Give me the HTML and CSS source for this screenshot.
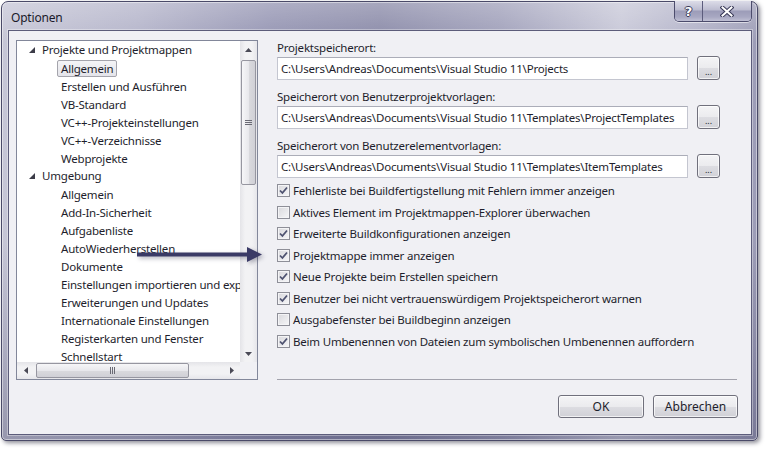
FILE: index.html
```html
<!DOCTYPE html>
<html lang="de">
<head>
<meta charset="utf-8">
<title>Optionen</title>
<link rel="stylesheet" href="styles.css">
</head>
<body>
<div class="window">
  <div class="titlebar">
    <span class="title">Optionen</span>
    <div class="caption-btns">
      <span class="cap-btn help">?</span>
      <span class="cap-btn close">
        <svg width="14" height="11" viewBox="0 0 14 11">
          <path d="M2.5 1.5 L11.5 9.5 M11.5 1.5 L2.5 9.5" stroke="#3a3a58" stroke-width="4" stroke-linecap="square"/>
          <path d="M2.5 1.5 L11.5 9.5 M11.5 1.5 L2.5 9.5" stroke="#ffffff" stroke-width="2" stroke-linecap="square"/>
        </svg>
      </span>
    </div>
  </div>
  <div class="client">
    <div class="tree">
      <div class="tree-content">
        <div class="node l0"><svg class="exp" width="6" height="6" viewBox="0 0 6 6"><polygon points="6,0 6,6 0,6" fill="#3c3c48"/></svg>Projekte und Projektmappen</div>
        <div class="node l1"><span class="item sel">Allgemein</span></div>
        <div class="node l1"><span class="item">Erstellen und Ausführen</span></div>
        <div class="node l1"><span class="item">VB-Standard</span></div>
        <div class="node l1"><span class="item">VC++-Projekteinstellungen</span></div>
        <div class="node l1"><span class="item">VC++-Verzeichnisse</span></div>
        <div class="node l1"><span class="item">Webprojekte</span></div>
        <div class="node l0"><svg class="exp" width="6" height="6" viewBox="0 0 6 6"><polygon points="6,0 6,6 0,6" fill="#3c3c48"/></svg>Umgebung</div>
        <div class="node l1"><span class="item">Allgemein</span></div>
        <div class="node l1"><span class="item">Add-In-Sicherheit</span></div>
        <div class="node l1"><span class="item">Aufgabenliste</span></div>
        <div class="node l1"><span class="item">AutoWiederherstellen</span></div>
        <div class="node l1"><span class="item">Dokumente</span></div>
        <div class="node l1"><span class="item">Einstellungen importieren und exportieren</span></div>
        <div class="node l1"><span class="item">Erweiterungen und Updates</span></div>
        <div class="node l1"><span class="item">Internationale Einstellungen</span></div>
        <div class="node l1"><span class="item">Registerkarten und Fenster</span></div>
        <div class="node l1"><span class="item">Schnellstart</span></div>
        <div class="node l1"><span class="item">Suchen und Ersetzen</span></div>
      </div>
      <div class="vscroll">
        <div class="sb-btn"><svg width="7" height="4" viewBox="0 0 7 4"><polygon points="3.5,0 7,4 0,4" fill="#4a4a56"/></svg></div>
        <div class="vtrack">
          <div class="vthumb"><svg width="7" height="5" viewBox="0 0 7 5"><path d="M0 0.5H7M0 2.5H7M0 4.5H7" stroke="#6a6a74" stroke-width="1"/></svg></div>
        </div>
        <div class="sb-btn"><svg width="7" height="4" viewBox="0 0 7 4"><polygon points="0,0 7,0 3.5,4" fill="#4a4a56"/></svg></div>
      </div>
      <div class="hscroll">
        <div class="sb-btn"><svg width="4" height="7" viewBox="0 0 4 7"><polygon points="4,0 4,7 0,3.5" fill="#4a4a56"/></svg></div>
        <div class="htrack">
          <div class="hthumb"><svg width="5" height="7" viewBox="0 0 5 7"><path d="M0.5 0V7M2.5 0V7M4.5 0V7" stroke="#6a6a74" stroke-width="1"/></svg></div>
        </div>
        <div class="sb-btn"><svg width="4" height="7" viewBox="0 0 4 7"><polygon points="0,0 4,3.5 0,7" fill="#4a4a56"/></svg></div>
      </div>
      <div class="corner"></div>
    </div>

    <div class="settings">
      <div class="field-label">Projektspeicherort:</div>
      <div class="pathrow">
        <div class="textbox">C:\Users\Andreas\Documents\Visual Studio 11\Projects</div>
        <button class="browse">...</button>
      </div>
      <div class="field-label">Speicherort von Benutzerprojektvorlagen:</div>
      <div class="pathrow">
        <div class="textbox">C:\Users\Andreas\Documents\Visual Studio 11\Templates\ProjectTemplates</div>
        <button class="browse">...</button>
      </div>
      <div class="field-label">Speicherort von Benutzerelementvorlagen:</div>
      <div class="pathrow">
        <div class="textbox">C:\Users\Andreas\Documents\Visual Studio 11\Templates\ItemTemplates</div>
        <button class="browse">...</button>
      </div>

      <div class="checks">
        <div class="check on"><span class="box"><svg width="9" height="9" viewBox="0 0 9 9"><path d="M1 4.5 L3.4 7 L8 1.5" fill="none" stroke="#4e5270" stroke-width="1.8"/></svg></span>Fehlerliste bei Buildfertigstellung mit Fehlern immer anzeigen</div>
        <div class="check"><span class="box"></span>Aktives Element im Projektmappen-Explorer überwachen</div>
        <div class="check on"><span class="box"><svg width="9" height="9" viewBox="0 0 9 9"><path d="M1 4.5 L3.4 7 L8 1.5" fill="none" stroke="#4e5270" stroke-width="1.8"/></svg></span>Erweiterte Buildkonfigurationen anzeigen</div>
        <div class="check on"><span class="box"><svg width="9" height="9" viewBox="0 0 9 9"><path d="M1 4.5 L3.4 7 L8 1.5" fill="none" stroke="#4e5270" stroke-width="1.8"/></svg></span>Projektmappe immer anzeigen</div>
        <div class="check on"><span class="box"><svg width="9" height="9" viewBox="0 0 9 9"><path d="M1 4.5 L3.4 7 L8 1.5" fill="none" stroke="#4e5270" stroke-width="1.8"/></svg></span>Neue Projekte beim Erstellen speichern</div>
        <div class="check on"><span class="box"><svg width="9" height="9" viewBox="0 0 9 9"><path d="M1 4.5 L3.4 7 L8 1.5" fill="none" stroke="#4e5270" stroke-width="1.8"/></svg></span>Benutzer bei nicht vertrauenswürdigem Projektspeicherort warnen</div>
        <div class="check"><span class="box"></span>Ausgabefenster bei Buildbeginn anzeigen</div>
        <div class="check on"><span class="box"><svg width="9" height="9" viewBox="0 0 9 9"><path d="M1 4.5 L3.4 7 L8 1.5" fill="none" stroke="#4e5270" stroke-width="1.8"/></svg></span>Beim Umbenennen von Dateien zum symbolischen Umbenennen auffordern</div>
      </div>
      <div class="sep"></div>
    </div>

    <div class="buttons">
      <button class="btn ok">OK</button>
      <button class="btn cancel">Abbrechen</button>
    </div>
  </div>
</div>

<svg class="pointer-arrow" width="140" height="30" viewBox="0 0 140 30">
  <rect x="7" y="12.5" width="114" height="4" fill="#3a3a66"/>
  <polygon points="117,7 132,14.5 117,22" fill="#3a3a66"/>
</svg>
</body>
</html>
```

FILE: styles.css
```css
* { box-sizing: border-box; }

html, body { margin: 0; }

body {
  position: relative;
  width: 767px;
  height: 450px;
  overflow: hidden;
  padding: 1px;
  background: #ffffff;
  font-family: "Noto Sans", "Open Sans", sans-serif;
  font-size: 11.5px;
  letter-spacing: -0.2px;
  color: #1e1e2c;
}

.window {
  width: 757px;
  height: 440px;
  display: flex;
  flex-direction: column;
  border: 1px solid #4a4a68;
  border-radius: 7px 7px 5px 5px;
  background:
    linear-gradient(180deg, rgba(255,255,255,0.25) 0, rgba(255,255,255,0) 40px, rgba(0,0,0,0) 55%, rgba(30,30,70,0.28) 100%),
    linear-gradient(90deg, #c6c6d6 0%, #b4b4ca 18%, #9494b2 36%, #8a8aa8 50%, #a0a0ba 66%, #c8c8d8 82%, #b2b2c8 92%, #9c9cb6 100%);
  box-shadow: 2px 2px 4px rgba(30,30,50,0.5), inset 0 0 0 1px rgba(255,255,255,0.45);
}

.titlebar {
  height: 28px;
  flex: none;
  display: flex;
  align-items: flex-start;
  padding-left: 9px;
}

.title {
  margin-top: 8px;
  line-height: 16px;
  font-size: 12px;
  color: #1a1a2a;
}

.caption-btns {
  margin-left: auto;
  margin-right: 5px;
  margin-top: -1px;
  height: 21px;
  display: flex;
  border: 1px solid #4c4c6c;
  border-top: none;
  border-radius: 0 0 5px 5px;
  overflow: hidden;
  box-shadow: 0 1px 0 rgba(255,255,255,0.55);
}

.cap-btn {
  height: 100%;
  display: flex;
  align-items: center;
  justify-content: center;
  background: linear-gradient(180deg, #dcdce8 0%, #bcbcd0 45%, #9c9cb8 50%, #a8a8c2 80%, #c0c0d4 100%);
}

.help {
  width: 28px;
  border-right: 1px solid #5c5c7c;
  font-family: "DejaVu Sans", sans-serif;
  font-weight: bold;
  font-size: 13px;
  letter-spacing: 0;
  color: #ffffff;
  text-shadow: 1px 0 0 #3a3a58, -1px 0 0 #3a3a58, 0 1px 0 #3a3a58, 0 -1px 0 #3a3a58;
}

.close { width: 48px; }

.client {
  flex: 1;
  margin: 0 5px 5px 6px;
  border: 1px solid #5c5c7a;
  box-shadow: 0 0 0 1px rgba(255,255,255,0.35);
  background: #f0f0f4;
  display: grid;
  grid-template-columns: 242px 1fr;
  grid-template-rows: 340px auto;
  column-gap: 19px;
  padding: 9px 14px 0 7px;
}

/* tree */
.tree {
  border: 1px solid #82879a;
  background: #ffffff;
  display: grid;
  grid-template-columns: 1fr 17px;
  grid-template-rows: 1fr 17px;
  overflow: hidden;
}

.tree-content {
  overflow: hidden;
  white-space: nowrap;
}

.node {
  height: 18px;
  line-height: 18px;
}

.l0 {
  display: flex;
  align-items: center;
  padding-left: 12px;
}

.exp { margin-right: 7px; flex: none; }

.l1 { padding-left: 40px; }

.item {
  display: inline-block;
  vertical-align: top;
  margin-top: 1px;
  height: 17px;
  line-height: 15px;
  padding: 0 3px;
  border: 1px solid transparent;
  border-radius: 2px;
}

.item.sel {
  border-color: #a4a4ac;
  background: linear-gradient(180deg, #f4f4f6, #e4e4ea);
}

.vscroll {
  display: flex;
  flex-direction: column;
  background: linear-gradient(90deg, #e4e4e8, #f2f2f4 30%, #f2f2f4 70%, #e6e6ea);
}

.sb-btn {
  width: 17px;
  height: 17px;
  flex: none;
  display: flex;
  align-items: center;
  justify-content: center;
}

.vtrack { flex: 1; }

.vthumb {
  height: 125px;
  margin: 2px 1px 0;
  border: 1px solid #9696a0;
  border-radius: 2px;
  background: linear-gradient(90deg, #f6f6f8 0%, #e8e8ec 50%, #dadade 51%, #d0d0d6 100%);
  display: flex;
  align-items: center;
  justify-content: center;
}

.hscroll {
  display: flex;
  background: linear-gradient(180deg, #e4e4e8, #f2f2f4 30%, #f2f2f4 70%, #e6e6ea);
}

.htrack { flex: 1; }

.hthumb {
  width: 153px;
  height: 15px;
  margin: 1px 0 0 2px;
  border: 1px solid #9696a0;
  border-radius: 2px;
  background: linear-gradient(180deg, #f6f6f8 0%, #e8e8ec 50%, #dadade 51%, #d0d0d6 100%);
  display: flex;
  align-items: center;
  justify-content: center;
}

.corner { background: #f0f0f4; }

/* settings */
.settings {
  display: flex;
  flex-direction: column;
}

.field-label {
  line-height: 16px;
}

.pathrow + .field-label { margin-top: 9px; }

.pathrow {
  display: flex;
  align-items: flex-end;
  gap: 9px;
}

.textbox {
  width: 411px;
  height: 23px;
  line-height: 21px;
  padding: 0 3px;
  background: #ffffff;
  border: 1px solid #c4c6d0;
  border-top-color: #abadb8;
  white-space: nowrap;
  overflow: hidden;
}

.browse {
  width: 23px;
  height: 24px;
  padding: 6px 0 0;
  font: 9px "Noto Sans", sans-serif;
  letter-spacing: 0;
  color: #1e1e2c;
  border: 1px solid #70707c;
  border-radius: 3px;
  background: linear-gradient(180deg, #f4f4f6 0%, #ebebee 50%, #dddde2 51%, #d2d2d8 100%);
  box-shadow: inset 0 0 0 1px rgba(255,255,255,0.7);
}

.checks {
  margin-top: 2px;
  display: flex;
  flex-direction: column;
}

.check {
  height: 21.5px;
  display: flex;
  align-items: center;
  white-space: nowrap;
}

.box {
  width: 13px;
  height: 13px;
  flex: none;
  margin-right: 3px;
  border: 1px solid #8e8f98;
  background: linear-gradient(135deg, #d8d8dc, #f6f6f8);
  box-shadow: inset 0 0 0 1px #f4f4f6;
  display: flex;
  align-items: center;
  justify-content: center;
}

.sep {
  margin-top: auto;
  height: 1px;
  background: #a2a2ac;
}

.buttons {
  grid-column: 1 / -1;
  display: flex;
  justify-content: flex-end;
  gap: 9px;
  margin-top: 15px;
  margin-right: -1px;
}

.btn {
  height: 23px;
  padding: 0;
  font: inherit;
  font-size: 12px;
  color: inherit;
  border: 1px solid #70707c;
  border-radius: 3px;
  background: linear-gradient(180deg, #f4f4f6 0%, #ebebee 50%, #dddde2 51%, #d0d0d6 100%);
  box-shadow: inset 0 0 0 1px rgba(255,255,255,0.7);
}

.ok { width: 86px; }
.cancel { width: 85px; }

.pointer-arrow {
  position: absolute;
  left: 130px;
  top: 240px;
  filter: drop-shadow(2px 2px 2px rgba(40,40,70,0.35));
}
```
